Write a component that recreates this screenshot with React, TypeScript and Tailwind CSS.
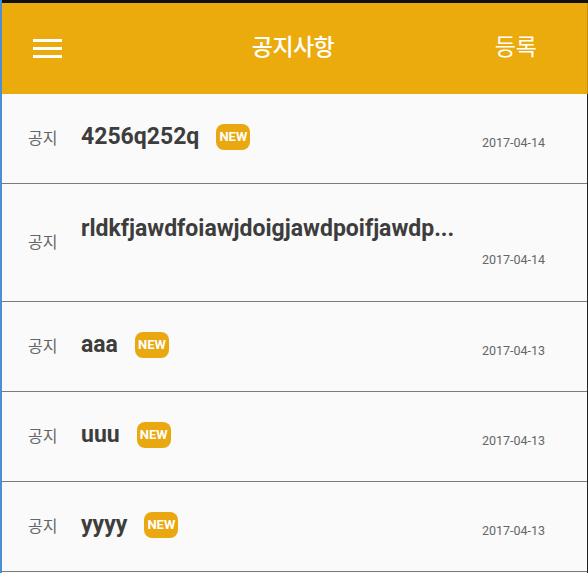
import React from "react";

type Notice = {
  title: string;
  date: string;
  isNew: boolean;
  long?: boolean;
};

const NOTICES: Notice[] = [
  { title: "4256q252q", date: "2017-04-14", isNew: true },
  { title: "rldkfjawdfoiawjdoigjawdpoifjawdp...", date: "2017-04-14", isNew: false, long: true },
  { title: "aaa", date: "2017-04-13", isNew: true },
  { title: "uuu", date: "2017-04-13", isNew: true },
  { title: "yyyy", date: "2017-04-13", isNew: true },
];

export default function App() {
  return (
    <div className="w-[588px] h-[573px] overflow-hidden bg-[#fafafa] border-l-2 border-[#4a8fd6] flex flex-col font-['Roboto','Noto_Sans_CJK_KR',sans-serif]">
      {/* top status strip */}
      <div className="h-[3px] bg-[#111] shrink-0" />

      {/* App bar */}
      <header className="h-[91px] shrink-0 bg-[#ebab0c] border-r border-[#c58e0a] grid grid-cols-[1fr_auto_1fr] items-center pl-[31px] pr-[50px] text-white">
        <button className="w-[29px] flex flex-col gap-[5px]">
          <span className="block h-[3px] bg-white" />
          <span className="block h-[3px] bg-white" />
          <span className="block h-[3px] bg-white" />
        </button>
        <h1 className="text-center text-[23px] font-medium tracking-tight ml-[16px]">공지사항</h1>
        <button className="justify-self-end text-[23px]">등록</button>
      </header>

      {/* List */}
      <ul className="flex-1 border-r border-[#222]">
        {NOTICES.map((n, i) => (
          <NoticeRow key={i} notice={n} />
        ))}
      </ul>
    </div>
  );
}

function NoticeRow({ notice }: { notice: Notice }) {
  return (
    <li
      className={`flex items-center pl-[26px] pr-[42px] pb-[4px] border-b border-[#7b7b7b] ${
        notice.long ? "h-[118px]" : "h-[90px]"
      }`}
    >
      <span className="w-[53px] shrink-0 text-[16px] text-[#666] font-['Noto_Sans_CJK_KR',sans-serif]">공지</span>

      <div className="flex-1 min-w-0 flex flex-wrap items-center">
        <span
          className={`text-[23px] font-bold text-[#3d3d3d] leading-[30px] whitespace-nowrap ${
            notice.long ? "basis-full" : ""
          }`}
        >
          {notice.title}
        </span>
        {notice.isNew && (
          <span className="ml-[17px] w-[34px] h-[26px] rounded-[8px] bg-[#e9a80f] text-white text-[13px] font-bold flex items-center justify-center">
            NEW
          </span>
        )}
        <span className={`ml-auto text-[12.5px] text-[#666] leading-[16px] ${notice.long ? "mt-[8px]" : "mt-[12px]"}`}>
          {notice.date}
        </span>
      </div>
    </li>
  );
}
